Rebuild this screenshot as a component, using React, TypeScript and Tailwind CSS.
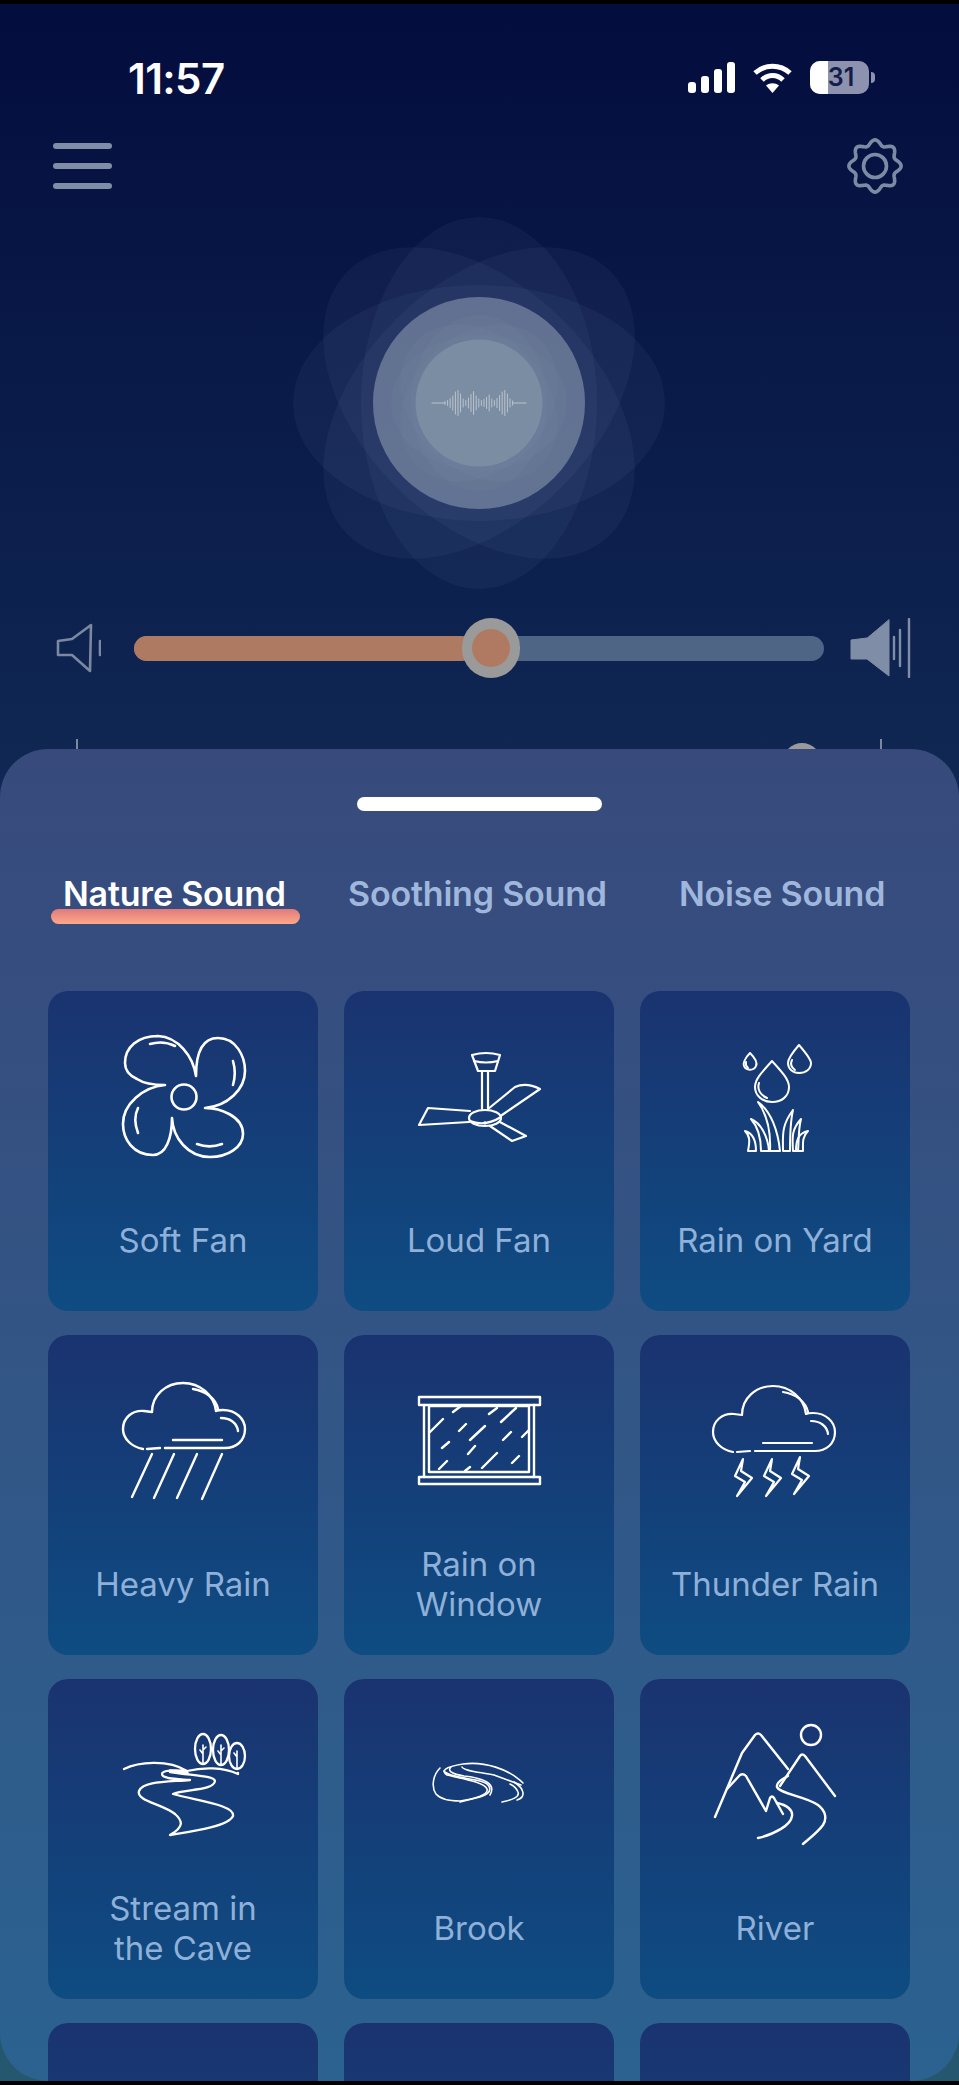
import React from "react";

const font = { fontFamily: "Inter, 'Noto Sans', sans-serif" };

function Cloud({ dy = 0, dx = 0 }: { dx?: number; dy?: number }) {
  return (
    <g transform={`translate(${dx} ${dy})`}>
      <path d="M95 114 C84 112 75 104 75 94 C75 83 84 75 96 76 L104 77 C104 60 118 48 135 48 C152 48 166 60 168 76 C170 75 172 75 175 75 C188 75 197 84 197 94 C197 106 188 113 177 113 L117 113" />
      <path d="M99 114 L112 113" />
      <path d="M125 105 L174 105" />
      <path d="M145 54 C158 56 168 64 170 74" />
      <path d="M173 83 C182 83 189 88 190 96" />
    </g>
  );
}

const icons: Record<string, React.ReactNode> = {
  softFan: (
    <g strokeWidth={2.6}>
      <path d="M117 94 C103 94 95 92 89 88 C80 84 77 78 77 72 C77 56 90 45 110 45 C130 46 145 65 148 85 C148 65 152 47 170 47 C188 47 197 65 197 80 C197 98 180 115 157 117 C172 117 195 125 195 143 C195 156 180 166 162 166 C140 166 125 147 124 127 C124 147 118 164 105 164 C85 164 75 148 75 133 C75 113 95 96 117 94 Z" />
      <circle cx="136" cy="106" r="12.5" />
      <path d="M102 53 C112 50 121 52 127 55" />
      <path d="M185 70 C188 80 187 87 185 94" />
      <path d="M149 153 C157 156 166 156 174 153" />
      <path d="M90 117 C86 125 87 134 90 142" />
    </g>
  ),
  loudFan: (
    <g strokeWidth={2.2}>
      <path d="M128 64 Q142 60 156 64 L151 80 L134 80 Z" />
      <path d="M130 70 Q142 73 154 70" />
      <path d="M138 81 L138 118 M144 81 L144 117" />
      <ellipse cx="141" cy="127" rx="16" ry="8" />
      <path d="M126 130 Q141 136 157 126" />
      <path d="M126 120 L84 117 L75 134 L125 131" />
      <path d="M144 118 L171 96 Q182 91 196 98 L158 124" />
      <path d="M146 135 L168 150 L182 145 L156 131" />
      <circle cx="141" cy="132" r="0.7" />
    </g>
  ),
  yard: (
    <g strokeWidth={2}>
      <path d="M110 62 C104 68 103 73 104 75 C106 80 114 80 116 75 C118 71 114 66 110 62 Z" />
      <path d="M106 71 C105 74 107 76 108 77" />
      <path d="M159 54 C152 62 148 68 148 72 C148 78 153 82 159 82 C166 82 171 78 171 72 C171 68 165 61 159 54 Z" />
      <path d="M152 69 C150 73 151 76 155 79" />
      <path d="M132 70 C122 81 115 88 115 96 C115 105 123 111 132 111 C142 111 149 105 149 96 C149 88 141 80 132 70 Z" />
      <path d="M119 92 C117 98 120 104 127 107" />
      <path d="M108 160 C110 150 110 145 105 140 C112 142 116 148 116 160 Z" />
      <path d="M121 160 C121 145 118 136 111 128 C121 132 128 146 129 160 Z" />
      <path d="M130 160 C131 140 128 125 118 111 C131 120 138 140 140 160 Z" />
      <path d="M143 160 C143 145 141 135 153 119 C150 132 150 146 150 160 Z" />
      <path d="M153 160 C152 145 152 138 161 128 C158 140 159 150 158 160 Z" />
      <path d="M156 160 C156 150 158 142 168 140 C162 146 163 152 163 160 Z" />
    </g>
  ),
  heavy: (
    <g strokeWidth={2.4}>
      <Cloud />
      <path d="M104 119 L84 162 M126 119 L106 163 M149 119 L129 163 M174 119 L154 164" />
    </g>
  ),
  window: (
    <g strokeWidth={2.4}>
      <rect x="75" y="62" width="121" height="8" />
      <rect x="75" y="142" width="121" height="7" />
      <path d="M80 70 L80 142 M190 70 L190 142" />
      <rect x="85" y="71" width="100" height="66" />
      <path d="M109 77 L117 71 M145 79 L153 73 M157 87 L172 73 M86 97 L99 84 M115 96 L122 89 M126 105 L141 91 M159 105 L167 97 M178 102 L185 95 M98 113 L105 107 M124 119 L131 111 M95 134 L103 126 M138 133 L153 118 M168 128 L175 121 M121 136 L126 132" />
    </g>
  ),
  thunder: (
    <g strokeWidth={2.2}>
      <Cloud dx={-2} dy={3} />
      {[0, 29, 57].map((x, i) => (
        <path key={x} transform={`translate(${x} ${i === 2 ? -2 : 0})`} d="M103 124 L95 141 L105 147 L97 161 L112 143 L101 136 Z" />
      ))}
    </g>
  ),
  stream: (
    <g strokeWidth={2.3}>
      <path d="M76 90 C90 83 120 80 139 92 C128 91 114 91 114 95 C114 100 130 100 142 101 C120 103 95 102 91 112 C88 122 115 125 127 135 C135 142 136 148 122 156 C140 153 180 148 185 137 C187 126 150 122 125 115 C135 110 166 112 167 102 C166 97 150 97 122 93" />
      <path d="M122 92 L139 94" strokeWidth={3.5} />
      <path d="M139 92 C155 88 175 88 190 95 L190 94" />
      <ellipse cx="155" cy="70" rx="8" ry="15" />
      <ellipse cx="173" cy="71" rx="8" ry="15" />
      <ellipse cx="189" cy="77" rx="8" ry="13" />
      <path d="M155 85 L155 66 M155 75 L152 71 M155 71 L158 68 M173 86 L173 66 M173 76 L170 72 M173 72 L176 69 M189 90 L189 72 M189 78 L186 74" strokeWidth={1.6} />
    </g>
  ),
  brook: (
    <g strokeWidth={1.6}>
      <path d="M96 89 C89 96 87 108 92 115 C98 122 110 122 116 122 C130 120 145 116 143 110 C141 104 125 101 103 96 C97 92 100 88 119 85 C140 82 165 90 179 104" />
      <path d="M100 92 C104 98 125 99 136 102 C148 105 150 114 136 118 L116 123" />
      <path d="M107 88 C103 92 108 95 120 97 C138 99 153 104 146 116" />
      <path d="M118 88 C120 92 135 93 150 96 L177 106" />
      <path d="M158 123 C168 121 176 118 174 113 C173 110 170 107 166 105" />
      <path d="M173 121 C182 118 181 110 170 103" />
    </g>
  ),
  river: (
    <g strokeWidth={2.4}>
      <circle cx="171" cy="56" r="10" />
      <path d="M75 138 L102 74 L115 56 Q118 53 121 56 L148 90" />
      <path d="M140 107 L160 77 Q162 74 165 77 L195 117" />
      <path d="M87 110 L100 96 Q103 94 106 97 L126 132 L130 119 Q132 116 134 119 L143 135" />
      <path d="M148 97 C142 100 136 104 137 108 C140 115 165 117 178 126 C186 132 187 140 183 146 C178 153 170 159 163 165" />
      <path d="M137 124 C147 126 153 131 152 137 C151 146 135 155 118 159" />
    </g>
  ),
};

const cards = [
  ["Soft Fan", "softFan"],
  ["Loud Fan", "loudFan"],
  ["Rain on Yard", "yard"],
  ["Heavy Rain", "heavy"],
  ["Rain on Window", "window"],
  ["Thunder Rain", "thunder"],
  ["Stream in the Cave", "stream"],
  ["Brook", "brook"],
  ["River", "river"],
  ["", ""],
  ["", ""],
  ["", ""],
];

const labels: Record<string, string[]> = {
  "Rain on Window": ["Rain on", "Window"],
  "Stream in the Cave": ["Stream in", "the Cave"],
};

function Card({ title, icon }: { title: string; icon: string }) {
  const lines = labels[title] ?? [title];
  return (
    <div className="h-[320px] rounded-[20px] bg-[linear-gradient(180deg,#1a3370,#0e4c82)] flex flex-col">
      <svg viewBox="0 0 270 210" className="w-[270px] h-[210px] shrink-0" fill="none" stroke="#ffffff" strokeLinecap="round" strokeLinejoin="round">
        {icons[icon]}
      </svg>
      <div className="h-[78px] flex flex-col items-center justify-center text-[33px] leading-[40px] text-[#8fb0d8]">
        {lines.map((l) => (
          <div key={l}>{l}</div>
        ))}
      </div>
    </div>
  );
}

function gearPath() {
  const pts: string[] = [];
  const n = 160;
  for (let i = 0; i <= n; i++) {
    const t = (i / n) * Math.PI * 2;
    const r = 23.5 + 2.6 * Math.cos(8 * t);
    pts.push(`${(28 + r * Math.sin(t)).toFixed(2)} ${(28 - r * Math.cos(t)).toFixed(2)}`);
  }
  return "M" + pts.join(" L") + " Z";
}

const wave = [3, 5, 9, 14, 22, 25, 18, 8, 5, 10, 17, 23, 14, 8, 5, 7, 11, 16, 8, 5, 9, 15, 22, 25, 18, 8, 4];

function Orb() {
  return (
    <svg viewBox="0 0 400 400" className="w-[400px] h-[400px] block">
      {[0, 45, 90, 135].map((a) => (
        <ellipse key={a} cx="200" cy="200" rx="186" ry="118" fill="#b9c9e6" fillOpacity="0.05" transform={`rotate(${a} 200 200)`} />
      ))}
      <circle cx="200" cy="200" r="106" fill="#8796ad" fillOpacity="0.62" />
      {[0, 45, 90, 135].map((a) => (
        <ellipse key={a} cx="200" cy="200" rx="88" ry="68" fill="#a0b2c8" fillOpacity="0.05" transform={`rotate(${a} 200 200)`} />
      ))}
      <circle cx="200" cy="200" r="63.5" fill="#7b8da2" />
      <g stroke="#c3cad2" strokeWidth="0.9" strokeLinecap="round">
        <path d="M153 200 H166" />
        <path d="M234 200 H247" />
        {wave.map((h, i) => (
          <line key={i} x1={166 + i * 2.6} x2={166 + i * 2.6} y1={200 - h / 2} y2={200 + h / 2} />
        ))}
      </g>
    </svg>
  );
}

export default function App() {
  return (
    <div className="w-[959px] h-[2085px] bg-black py-[4px] overflow-hidden" style={font}>
      <div className="h-[2077px] bg-[linear-gradient(180deg,#030d3e_0%,#0e2350_31%,#25586f_100%)] flex flex-col">
        <div className="h-[745px] shrink-0 overflow-hidden">
          {/* status */}
          <div className="h-[90px] pt-[50px] pl-[128px] pr-[84px] flex items-start justify-between">
            <div className="text-[42px] leading-[50px] font-semibold text-white tracking-[-0.6px]">11:57</div>
            <div className="flex items-center gap-[17px] pt-[7px]">
              <svg viewBox="0 0 47 31" className="w-[47px] h-[31px]" fill="#fff">
                <rect x="0" y="20" width="8" height="11" rx="3" />
                <rect x="13" y="14" width="8" height="17" rx="3" />
                <rect x="26" y="7" width="8" height="24" rx="3" />
                <rect x="39" y="0" width="8" height="31" rx="3" />
              </svg>
              <svg viewBox="0 0 41 30" className="w-[41px] h-[30px]" fill="none" stroke="#fff" strokeWidth="5">
                <path d="M3 10 C13 1 28 1 38 10" />
                <path d="M10 17 C16 11 25 11 31 17" />
                <path d="M20.5 30 L14 22.5 C18 19.5 23 19.5 27 22.5 Z" fill="#fff" stroke="none" />
              </svg>
              <div className="flex items-center">
                <div className="relative w-[59px] h-[33px] rounded-[10px] overflow-hidden bg-[#8d93ae] flex">
                  <div className="w-[18px] bg-white" />
                  <div className="absolute inset-0 pl-[3px] flex items-center justify-center text-[25px] font-semibold text-[#141d4a]">31</div>
                </div>
                <div className="w-[4px] h-[11px] ml-[2px] rounded-r-full bg-[#8d93ae]" />
              </div>
            </div>
          </div>
          {/* nav */}
          <div className="h-[60px] mt-[42px] pl-[53px] pr-[56px] flex items-center justify-between">
            <div className="w-[59px] flex flex-col gap-[14px]">
              <div className="h-[6px] rounded-full bg-[#7f8da6]" />
              <div className="h-[6px] rounded-full bg-[#7f8da6]" />
              <div className="h-[6px] rounded-full bg-[#7f8da6]" />
            </div>
            <svg viewBox="0 0 56 56" className="w-[56px] h-[56px]" fill="none" stroke="#7c8ba4" strokeWidth="3.6">
              <path d={gearPath()} />
              <circle cx="28" cy="28" r="11.5" />
            </svg>
          </div>
          {/* orb */}
          <div className="flex justify-center ml-[-1px] mt-[7px] h-[409px]">
            <Orb />
          </div>
          {/* slider */}
          <div className="h-[60px] mt-[6px] flex items-center pl-[56px]">
            <svg viewBox="0 0 45 50" className="w-[45px] h-[50px] shrink-0" fill="none" stroke="#7a899f" strokeWidth="2.6" strokeLinejoin="round" strokeLinecap="round">
              <path d="M35 2 L34 48 L16 32 L2 32 L2 18 L16 16 Z" />
              <path d="M44 18 L44 32" />
            </svg>
            <div className="w-[690px] h-[25px] ml-[33px] rounded-full bg-[#4f6585] relative">
              <div className="w-[339px] h-[25px] rounded-full bg-[#ae7a62]" />
              <div className="absolute left-[328px] top-[-18px] w-[58px] h-[60px] rounded-full bg-[#9a9a9a] flex items-center justify-center">
                <div className="w-[38px] h-[38px] rounded-full bg-[#b07a62]" />
              </div>
            </div>
            <svg viewBox="0 0 61 60" className="w-[61px] h-[60px] ml-[26px] shrink-0" fill="#7f8ea6" stroke="#7f8ea6" strokeLinecap="round">
              <path d="M39 2 L39 58 L17 41 L1 41 L1 22 L17 20 Z" strokeWidth="1" strokeLinejoin="round" />
              <path d="M44 19 V41 M50 12 V48 M59 1 V59" fill="none" strokeWidth="2.4" />
            </svg>
          </div>
          {/* second slider, mostly hidden */}
          <div className="relative h-[20px] mt-[61px]">
            <div className="absolute left-[76px] top-0 w-[2px] h-[12px] bg-[#7a899f]" />
            <div className="absolute left-[783px] top-[4px] w-[38px] h-[38px] rounded-full bg-[#9a9a9a]" />
            <div className="absolute left-[880px] top-0 w-[2px] h-[12px] bg-[#7a899f]" />
          </div>
        </div>

        {/* sheet */}
        <div className="flex-1 min-h-0 overflow-hidden rounded-[48px] bg-[linear-gradient(180deg,#384a7c,#2b6290)]">
          <div className="mt-[48px] w-[245px] h-[14px] rounded-full bg-white ml-[357px]" />
          <div className="relative h-[40px] mt-[63px] pl-[63px] flex items-center text-[#a0b7dd] text-[34px] font-semibold leading-[40px] tracking-[-0.2px]">
            <div className="relative text-white whitespace-nowrap w-[223px]">
              Nature Sound
              <div className="absolute left-[-12px] top-[35px] w-[249px] h-[15px] rounded-full bg-[linear-gradient(180deg,#df7b7b,#ffa78a)]" />
            </div>
            <div className="ml-[62px] whitespace-nowrap w-[258px]">Soothing Sound</div>
            <div className="ml-[73px] whitespace-nowrap">Noise Sound</div>
          </div>
          <div className="grid grid-cols-[270px_270px_270px] gap-x-[26px] gap-y-[24px] mt-[77px] pl-[48px]">
            {cards.map(([t, i], k) => (
              <Card key={k} title={t} icon={i} />
            ))}
          </div>
        </div>
      </div>
    </div>
  );
}
